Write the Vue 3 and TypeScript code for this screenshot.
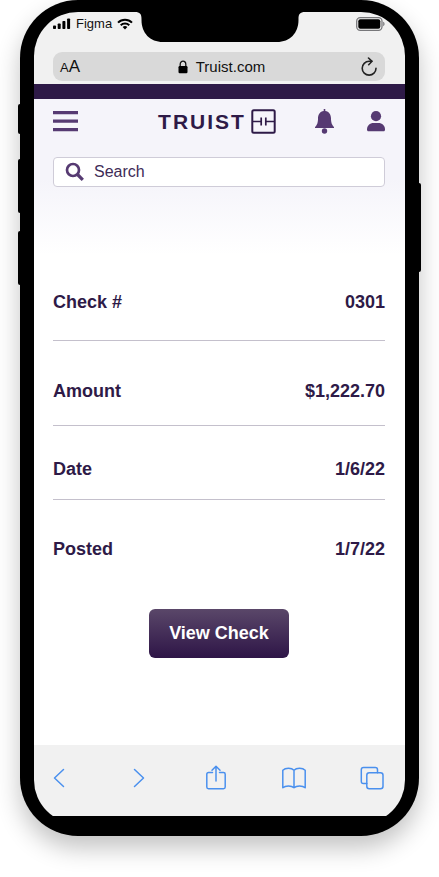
<script setup lang="ts">
import { ref } from 'vue'

interface Detail {
  label: string
  value: string
  size: 'first' | 'tall' | 'short' | 'last'
}

const query = ref('')

const details: Detail[] = [
  { label: 'Check #', value: '0301', size: 'first' },
  { label: 'Amount', value: '$1,222.70', size: 'tall' },
  { label: 'Date', value: '1/6/22', size: 'short' },
  { label: 'Posted', value: '1/7/22', size: 'last' },
]
</script>

<template>
  <div class="phone">
    <span class="key key-mute"></span>
    <span class="key key-up"></span>
    <span class="key key-down"></span>
    <span class="key key-power"></span>

    <div class="screen">
      <svg class="notch" width="170" height="30" viewBox="0 0 170 30" aria-hidden="true">
        <path d="M0 0H170C165 0 163.500 2 163.500 7V8C163.500 21 155 30 142 30H28C15 30 6.500 21 6.500 8V7C6.500 2 5 0 0 0Z" fill="#000" />
      </svg>

      <div class="chrome">
        <div class="status">
          <svg width="18" height="12" viewBox="0 0 18 12" aria-hidden="true">
            <rect x="0" y="7.500" width="3" height="3.500" rx="0.800" />
            <rect x="4.700" y="5.500" width="3" height="5.500" rx="0.800" />
            <rect x="9.400" y="3" width="3" height="8" rx="0.800" />
            <rect x="14.100" y="0.500" width="3" height="10.500" rx="0.800" />
          </svg>
          <span class="carrier">Figma</span>
          <svg width="16" height="12" viewBox="0 0 16 12" aria-hidden="true">
            <g fill="none" stroke="#000" stroke-width="2">
              <path d="M1 4.600A10 10 0 0 1 15 4.600" />
              <path d="M3.700 7.300A6.200 6.200 0 0 1 12.300 7.300" />
            </g>
            <path d="M8 11.500L5.600 9.100A3.400 3.400 0 0 1 10.400 9.100Z" />
          </svg>
          <svg class="battery" width="29" height="14" viewBox="0 0 29 14" aria-hidden="true">
            <rect x="0.700" y="0.700" width="25.300" height="12.600" rx="3.500" fill="none" stroke="#77777a" stroke-width="1.300" />
            <rect x="2.300" y="2.300" width="22" height="9.400" rx="2" />
            <path d="M27.200 4.800C29 5.400 29 8.600 27.200 9.200Z" fill="#77777a" />
          </svg>
        </div>

        <div class="address">
          <button type="button" class="text-size" aria-label="Text size"><small>A</small>A</button>
          <button type="button" class="url">
            <svg width="10" height="14" viewBox="0 0 10 14" aria-hidden="true">
              <path d="M2.200 7V4.200C2.200 .2 7.800 .2 7.800 4.200V7" fill="none" stroke="#111" stroke-width="1.300" />
              <rect x="0.500" y="6" width="9" height="7.300" rx="1.200" fill="#000" />
            </svg>
            <span>Truist.com</span>
          </button>
          <button type="button" class="reload" aria-label="Reload">
            <svg width="18" height="20" viewBox="0 0 18 20" fill="none" stroke="#222" stroke-width="1.600" stroke-linecap="round" stroke-linejoin="round" aria-hidden="true">
              <path d="M16 11.200A6.900 6.900 0 1 1 9.100 4.300H11.800" />
              <path d="M8.500 1L12 4.300L8.700 7.700" />
            </svg>
          </button>
        </div>
      </div>

      <main class="page">
        <header class="header">
          <button type="button" class="menu" aria-label="Menu">
            <svg width="25" height="21" viewBox="0 0 25 21" fill="#563a72" aria-hidden="true">
              <path d="M0 0H25V3.300H0ZM0 8.500H25V11.800H0ZM0 17H25V20.300H0Z" />
            </svg>
          </button>
          <a class="brand" href="#">
            <span>TRUIST</span>
            <svg width="25" height="25" viewBox="0 0 25 25" fill="none" stroke="#2e1a47" stroke-width="2" aria-hidden="true">
              <rect x="1.300" y="1.300" width="22.400" height="22.400" rx="1.500" />
              <path d="M1.500 12.500H10M15 12.500H23.500M10.200 8.500V16.500M14.800 8.500V16.500" stroke-width="1.700" />
            </svg>
          </a>
          <nav class="actions">
            <button type="button" aria-label="Alerts">
              <svg width="19" height="25" viewBox="0 0 19 25" fill="#563a72" aria-hidden="true">
                <path d="M8.700 0H10.300V2C14 2.500 16 5.500 16 9.300C16 14 17 16 19 18.200V19H0V18.200C2 16 3 14 3 9.300C3 5.500 5 2.500 8.700 2Z" />
                <circle cx="9.500" cy="22" r="2.700" />
              </svg>
            </button>
            <button type="button" aria-label="Profile">
              <svg width="18" height="21" viewBox="0 0 18 21" fill="#563a72" aria-hidden="true">
                <circle cx="9" cy="5.200" r="5.100" />
                <path d="M0 18.500C0 14.500 3 12 6.500 12H11.500C15 12 18 14.500 18 18.500C18 19.700 17.500 20.300 16.500 20.300H1.500C.5 20.300 0 19.700 0 18.500Z" />
              </svg>
            </button>
          </nav>
        </header>

        <label class="search">
          <svg width="20" height="20" viewBox="0 0 20 20" fill="none" stroke="#563a72" aria-hidden="true">
            <circle cx="8" cy="8" r="6" stroke-width="2.700" />
            <path d="M12.500 12.500L17.800 17.800" stroke-width="3.200" />
          </svg>
          <input v-model="query" type="search" placeholder="Search" aria-label="Search" />
        </label>

        <dl class="details">
          <div v-for="item in details" :key="item.label" class="row" :class="item.size">
            <dt>{{ item.label }}</dt>
            <dd>{{ item.value }}</dd>
          </div>
        </dl>

        <button type="button" class="view">View Check</button>
      </main>

      <nav class="toolbar">
        <button type="button" aria-label="Back">
          <svg width="24" height="26" viewBox="0 0 24 26"><path d="M16.500 4.500L7.500 13L16.500 21.500" /></svg>
        </button>
        <button type="button" aria-label="Forward">
          <svg width="24" height="26" viewBox="0 0 24 26"><path d="M9.500 4.500L18.500 13L9.500 21.500" /></svg>
        </button>
        <button type="button" aria-label="Share">
          <svg width="24" height="26" viewBox="0 0 24 26">
            <path d="M8.500 7.500H4.500Q2.800 7.500 2.800 9.200V22Q2.800 23.700 4.500 23.700H19.500Q21.200 23.700 21.200 22V9.200Q21.200 7.500 19.500 7.500H15.500" />
            <path d="M12 16V1.200M8 5.200L12 1.200L16 5.200" />
          </svg>
        </button>
        <button type="button" aria-label="Bookmarks">
          <svg width="24" height="26" viewBox="0 0 24 26">
            <path d="M12 5.200C9.500 2.700 3.500 2.700 .8 5.200V22.800C3.500 20.300 9.500 20.300 12 22.800C14.500 20.300 20.500 20.300 23.200 22.800V5.200C20.500 2.700 14.500 2.700 12 5.200ZM12 5.200V22.800" />
          </svg>
        </button>
        <button type="button" aria-label="Tabs">
          <svg width="24" height="26" viewBox="0 0 24 26">
            <rect x="6.800" y="7.800" width="16.200" height="16" rx="2.500" />
            <path d="M6.800 18.500H3.500Q1.300 18.500 1.300 16.300V4.800Q1.300 2.600 3.500 2.600H15.300Q17.500 2.600 17.500 4.800V7.800" />
          </svg>
        </button>
      </nav>
    </div>
  </div>
</template>

<style>
body {
  margin: 0;
  background: #fff;
}
</style>

<style scoped>
.phone {
  position: relative;
  margin: 0 20px 40px;
  padding: 12px 14px;
  border-radius: 58px;
  background: #000;
  box-shadow: 0 12px 24px rgba(0, 0, 0, 0.24);
  font-family: "Liberation Sans", Arial, sans-serif;
  color: #2e1a47;
}

button {
  display: flex;
  align-items: center;
  justify-content: center;
  padding: 0;
  border: 0;
  background: none;
  color: inherit;
  font: inherit;
  cursor: pointer;
}

svg {
  display: block;
  flex: none;
}

.key {
  position: absolute;
  left: -2px;
  width: 4px;
  height: 54px;
  border-radius: 2px;
  background: #000;
}

.key-mute {
  top: 104px;
  height: 30px;
}

.key-up {
  top: 159px;
}

.key-down {
  top: 231px;
}

.key-power {
  top: 183px;
  right: -2px;
  left: auto;
  height: 89px;
}

.screen {
  position: relative;
  overflow: hidden;
  padding-bottom: 8px;
  border-radius: 44px;
  background: #000;
}

.notch {
  position: absolute;
  top: 0;
  left: 50%;
  transform: translateX(-50%);
}

.chrome {
  padding: 0 20px 3px 19px;
  background: #f1f1f1;
  color: #111;
}

.status {
  display: flex;
  align-items: center;
  height: 24px;
  margin-bottom: 16px;
}

.carrier {
  margin: 0 5px;
  font-size: 13px;
  line-height: 16px;
}

.battery {
  margin-left: auto;
}

.address {
  display: grid;
  grid-template-columns: 1fr auto 1fr;
  align-items: center;
  height: 29px;
  padding: 0 7px;
  border-radius: 9px;
  background: #d9d9d9;
}

.text-size {
  justify-self: start;
  align-items: baseline;
  font-size: 17px;
}

.text-size small {
  font-size: 13px;
}

.url {
  gap: 8px;
  padding-left: 5px;
  font-size: 15px;
}

.reload {
  justify-self: end;
}

.page {
  padding: 10px 20px 86px 19px;
  border-top: 15px solid #2e1a47;
  background: linear-gradient(#f5f4fa 0, #f5f4fa 80px, #fff 156px);
}

.header {
  display: grid;
  grid-template-columns: 1fr auto 1fr;
  align-items: center;
  height: 24px;
}

.menu {
  justify-self: start;
}

.brand {
  display: flex;
  align-items: center;
  gap: 5px;
  padding-right: 4px;
  color: #2e1a47;
  font-size: 21px;
  font-weight: bold;
  letter-spacing: 2px;
  line-height: 24px;
  text-decoration: none;
}

.actions {
  display: flex;
  align-items: center;
  justify-content: flex-end;
  gap: 33px;
}

.search {
  display: flex;
  align-items: center;
  gap: 9px;
  height: 28px;
  margin-top: 24px;
  padding-left: 11px;
  border: 1px solid #cfccd8;
  border-radius: 4px;
  background: #fff;
}

.search input {
  flex: 1;
  min-width: 0;
  padding: 0;
  border: 0;
  outline: 0;
  background: none;
  color: #2e1a47;
  font: 16px/20px "Liberation Sans", Arial, sans-serif;
}

.search input::placeholder {
  color: #3e2b57;
  opacity: 1;
}

.details {
  margin: 105px 0 0;
}

.row {
  display: flex;
  justify-content: space-between;
  border-bottom: 1px solid #c4c0cc;
  font-size: 18px;
  font-weight: bold;
  line-height: 20px;
}

.row dd {
  margin: 0;
}

.first {
  padding-bottom: 28px;
}

.tall {
  padding: 40px 0 24px;
}

.short {
  padding: 33px 0 20px;
}

.last {
  padding-top: 39px;
  border-bottom: 0;
}

.view {
  margin: 50px auto 0;
  padding: 14px 20px;
  border-radius: 6px;
  background: linear-gradient(#5a4769, #2e1547);
  color: #fff;
  font-size: 18px;
  font-weight: bold;
  line-height: 21px;
}

.toolbar {
  display: flex;
  align-items: flex-start;
  justify-content: space-between;
  height: 51px;
  padding: 20px 21px 0 13px;
  background: #f1f1f1;
}
.page {
  padding-bottom: 87px;
}

.toolbar svg {
  fill: none;
  stroke: #4a90ee;
  stroke-width: 1.5px;
  stroke-linecap: round;
  stroke-linejoin: round;
}
</style>
